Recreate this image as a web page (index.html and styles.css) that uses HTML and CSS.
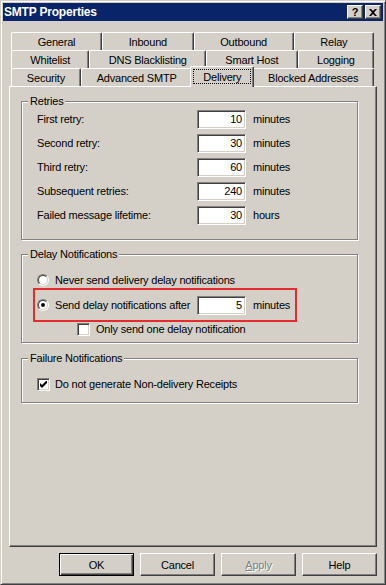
FILE: index.html
```html
<!DOCTYPE html>
<html>
    <head>
        <title>SMTP Properties</title>
        <meta charset="UTF-8">
        <link rel="stylesheet" href="styles.css">
    </head>
    <body>
        <div class="window">
            <div class="caption">
                <span class="caption-title">SMTP Properties</span>
                <span class="caption-buttons">
                    <span class="caption-btn">?</span>
                    <span class="caption-btn">
                        <svg width="8" height="7" viewBox="0 0 8 7"><path d="M0 0h2l2 2 2-2h2L5 3.5 8 7H6L4 5 2 7H0l3-3.5z" fill="#000"/></svg>
                    </span>
                </span>
            </div>

            <div class="client">
                <div class="tabs">
                    <div class="tab-row">
                        <div class="tab">General</div>
                        <div class="tab">Inbound</div>
                        <div class="tab">Outbound</div>
                        <div class="tab">Relay</div>
                    </div>
                    <div class="tab-row">
                        <div class="tab">Whitelist</div>
                        <div class="tab">DNS Blacklisting</div>
                        <div class="tab">Smart Host</div>
                        <div class="tab">Logging</div>
                    </div>
                    <div class="tab-row">
                        <div class="tab">Security</div>
                        <div class="tab">Advanced SMTP</div>
                        <div class="tab selected"><span class="focus">Delivery</span></div>
                        <div class="tab">Blocked Addresses</div>
                    </div>
                </div>

                <div class="panel">
                    <fieldset class="group retries">
                        <legend>Retries</legend>
                        <div class="field-grid">
                            <span>First retry:</span><span class="edit">10</span><span>minutes</span>
                            <span>Second retry:</span><span class="edit">30</span><span>minutes</span>
                            <span>Third retry:</span><span class="edit">60</span><span>minutes</span>
                            <span>Subsequent retries:</span><span class="edit">240</span><span>minutes</span>
                            <span>Failed message lifetime:</span><span class="edit">30</span><span>hours</span>
                        </div>
                    </fieldset>

                    <fieldset class="group delay">
                        <legend>Delay Notifications</legend>
                        <div class="option"><span class="radio"></span>Never send delivery delay notifications</div>
                        <div class="highlight">
                            <div class="option"><span class="radio checked"></span>Send delay notifications after</div>
                            <span class="edit">5</span>
                            <span>minutes</span>
                        </div>
                        <div class="option sub-option"><span class="check"></span>Only send one delay notification</div>
                    </fieldset>

                    <fieldset class="group failure">
                        <legend>Failure Notifications</legend>
                        <div class="option check-option">
                            <span class="check">
                                <svg width="7" height="7" viewBox="0 0 7 7"><polygon points="0,2 2,4 7,-1 7,2 2,7 0,5" fill="#000"/></svg>
                            </span>Do not generate Non-delivery Receipts
                        </div>
                    </fieldset>
                </div>

                <div class="buttons">
                    <span class="btn default">OK</span>
                    <span class="btn">Cancel</span>
                    <span class="btn disabled"><u>A</u>pply</span>
                    <span class="btn">Help</span>
                </div>
            </div>
        </div>
    </body>
</html>
```

FILE: styles.css
```css
body { margin: 0; font: 11px "Liberation Sans", Arial, sans-serif; letter-spacing: -0.2px; color: #000; }

.window { box-sizing: border-box; width: 386px; height: 585px; padding: 2px; display: flex; flex-direction: column; background: #d4d0c8; border: 1px solid; border-color: #d4d0c8 #404040 #404040 #d4d0c8; box-shadow: inset 1px 1px #fff, inset -1px -1px #808080; }

/* title bar */
.caption { height: 18px; flex: none; display: flex; align-items: center; padding: 0 2px 0 1px; background: #0a246a; color: #fff; }
.caption-title { flex: 1; font-weight: bold; font-size: 12px; }
.caption-buttons { display: flex; gap: 2px; }
.caption-btn { box-sizing: border-box; width: 16px; height: 14px; display: flex; align-items: center; justify-content: center; background: #d4d0c8; color: #000; font-weight: bold; font-size: 11px; border: 1px solid; border-color: #fff #404040 #404040 #fff; box-shadow: inset -1px -1px #808080; }

.client { flex: 1; display: flex; flex-direction: column; padding: 11px 6px 6px; }

/* tabs */
.tabs { padding: 0 3px 0 2px; }
.tab-row { display: flex; height: 18px; }
.tab { flex: 1 1 auto; box-sizing: border-box; height: 18px; padding: 0 6px; display: flex; align-items: center; justify-content: center; white-space: nowrap; background: #d4d0c8; border-top: 1px solid #fff; border-left: 1px solid #fff; border-right: 1px solid #404040; border-radius: 2px 2px 0 0; box-shadow: inset -1px 0 #808080; }
.tab.selected { height: 21px; margin: -2px -2px 0; padding: 2px 2px 3px; position: relative; z-index: 1; }
.focus { flex: 1; align-self: stretch; display: flex; align-items: center; justify-content: center; border: 1px dotted #000; }

/* page */
.panel { flex: 1; padding: 8px 18px 0 11px; border: 1px solid; border-color: #fff #404040 #404040 #fff; box-shadow: inset -1px -1px #808080; }

.group { margin: 0; padding: 0 15px 13px; min-width: 0; border: 1px solid #808080; box-shadow: 1px 1px #fff, inset 1px 1px #fff; }
.group legend { margin-left: -9px; padding: 0 2px; line-height: 13px; background: #d4d0c8; }
.delay { margin-top: 8px; padding-top: 11px; padding-bottom: 6px; }
.failure { margin-top: 9px; padding-top: 11px; padding-bottom: 10px; }

.field-grid { display: grid; grid-template-columns: 153px 49px auto; grid-auto-rows: 22px; column-gap: 7px; row-gap: 2px; align-items: center; }

.edit { box-sizing: border-box; height: 19px; padding-right: 3px; line-height: 17px; text-align: right; background: #fff; border: 1px solid; border-color: #808080 #fff #fff #808080; box-shadow: inset 1px 1px #404040, inset -1px -1px #d4d0c8; }

.option { display: flex; align-items: center; gap: 6px; height: 16px; white-space: nowrap; }
.highlight { box-sizing: border-box; width: 264px; height: 34px; margin-left: -4px; padding-left: 2px; display: grid; grid-template-columns: 153px 49px auto; column-gap: 7px; align-items: center; border: 2px solid #e52b2b; }
.sub-option { height: 14px; margin-left: 40px; }
.check-option { gap: 5px; }

.radio { flex: none; box-sizing: border-box; width: 12px; height: 12px; position: relative; border-radius: 50%; border: 1px solid; border-color: #808080 #fff #fff #808080; }
.radio::before { content: ""; position: absolute; inset: 0; border-radius: 50%; background: #fff; border: 1px solid; border-color: #404040 #d4d0c8 #d4d0c8 #404040; }
.radio.checked::after { content: ""; position: absolute; left: 3px; top: 3px; width: 4px; height: 4px; border-radius: 50%; background: #000; }

.check { flex: none; box-sizing: border-box; width: 13px; height: 13px; display: flex; align-items: center; justify-content: center; background: #fff; border: 1px solid; border-color: #808080 #fff #fff #808080; box-shadow: inset 1px 1px #404040, inset -1px -1px #d4d0c8; }

/* dialog buttons */
.buttons { display: flex; justify-content: flex-end; gap: 6px; margin-top: 6px; }
.btn { box-sizing: border-box; width: 75px; height: 23px; display: flex; align-items: center; justify-content: center; background: #d4d0c8; border: 1px solid; border-color: #fff #404040 #404040 #fff; box-shadow: inset -1px -1px #808080; }
.btn.default { border-color: #000; box-shadow: inset 1px 1px #fff, inset -1px -1px #404040, inset -2px -2px #808080; }
.btn.disabled { color: #808080; text-shadow: 1px 1px #fff; }
.btn u { text-decoration: underline; }
```
